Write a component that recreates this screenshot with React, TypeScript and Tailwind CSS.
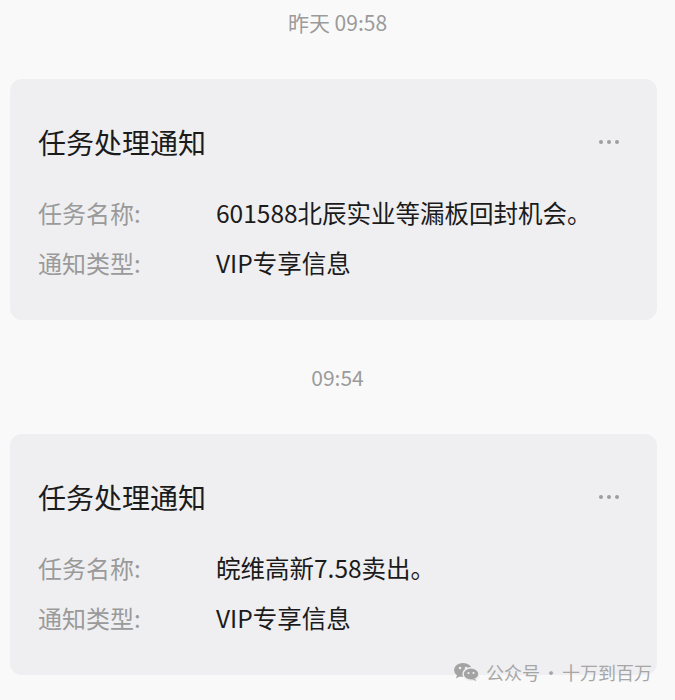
import React from 'react'

// ── Data ─────────────────────────────────────────────────────────────────────

type Notice = {
  time: string
  task: string
  kind: string
}

const NOTICES: Notice[] = [
  { time: '昨天 09:58', task: '601588北辰实业等漏板回封机会。', kind: 'VIP专享信息' },
  { time: '09:54', task: '皖维高新7.58卖出。', kind: 'VIP专享信息' },
]

const FONT = "font-['Microsoft_YaHei','Noto_Sans_CJK_SC','Noto_Sans',sans-serif]"

// ── Pieces ───────────────────────────────────────────────────────────────────

function TimeStamp({ text }: { text: string }) {
  return (
    <div className="text-center text-[21px] leading-[28px] text-[#9b9b9b]">{text}</div>
  )
}

function MoreDots() {
  return (
    <div className="flex items-center gap-[4px]">
      <span className="h-[4px] w-[4px] rounded-full bg-[#9e9e9e]" />
      <span className="h-[4px] w-[4px] rounded-full bg-[#9e9e9e]" />
      <span className="h-[4px] w-[4px] rounded-full bg-[#9e9e9e]" />
    </div>
  )
}

function Row({ label, value }: { label: string; value: string }) {
  return (
    <div className="flex h-[50px] items-center">
      <span className="w-[178px] shrink-0 text-[24px] text-[#9a9a9a]">{label}</span>
      <span className="text-[24.5px] text-[#1b1b1b]">{value}</span>
    </div>
  )
}

function NoticeCard({ notice }: { notice: Notice }) {
  return (
    <div className="ml-[10px] mr-[18px] rounded-[12px] bg-[#efeff1] pl-[28px] pr-[38px] pt-[45px] pb-[32px]">
      <div className="flex h-[36px] items-center justify-between">
        <h2 className="text-[28px] leading-[36px] text-[#1b1b1b]">任务处理通知</h2>
        <MoreDots />
      </div>
      <div className="mt-[28px]">
        <Row label="任务名称:" value={notice.task} />
        <Row label="通知类型:" value={notice.kind} />
      </div>
    </div>
  )
}

function WeChatIcon() {
  return (
    <svg width="25" height="18" viewBox="0 0 25 18">
      <ellipse cx="9" cy="7" rx="9" ry="7" fill="#a3a3a3" />
      <path d="M3 12 L2 15.5 L6.5 13 Z" fill="#a3a3a3" />
      <circle cx="6" cy="5" r="1.3" fill="#efeff1" />
      <circle cx="12" cy="5" r="1.3" fill="#efeff1" />
      <ellipse cx="17" cy="11" rx="8" ry="6.3" fill="#a3a3a3" stroke="#efeff1" strokeWidth="1.5" />
      <path d="M21 16 L22.5 18 L18 16.5 Z" fill="#a3a3a3" />
      <circle cx="14.5" cy="10" r="1.1" fill="#efeff1" />
      <circle cx="19.5" cy="10" r="1.1" fill="#efeff1" />
    </svg>
  )
}

// ── Main ─────────────────────────────────────────────────────────────────────

export default function App() {
  return (
    <div className={`relative min-h-[700px] bg-[#f9f9f9] pt-[8px] ${FONT}`}>
      {NOTICES.map((n, i) => (
        <div key={i} className={i > 0 ? 'mt-[43px]' : ''}>
          <TimeStamp text={n.time} />
          <div className="mt-[43px]">
            <NoticeCard notice={n} />
          </div>
        </div>
      ))}

      {/* watermark */}
      <div className="absolute left-[454px] top-[661px] flex items-center gap-[7px] text-[18px] leading-[22px] text-[#a6a6a6]">
        <WeChatIcon />
        <span>
          公众号<span className="mx-[2px]">·</span>十万到百万
        </span>
      </div>
    </div>
  )
}
